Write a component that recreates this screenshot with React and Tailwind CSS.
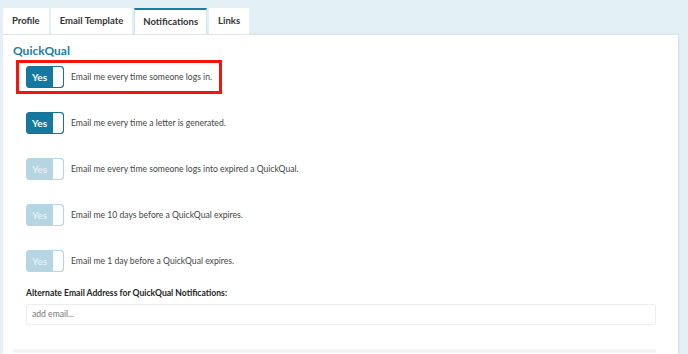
import { useState } from 'react'

const tabs = ['Profile', 'Email Template', 'Notifications', 'Links']

const options = [
  { label: 'Email me every time someone logs in.', on: true, highlight: true },
  { label: 'Email me every time a letter is generated.', on: true },
  { label: 'Email me every time someone logs into expired a QuickQual.', on: false },
  { label: 'Email me 10 days before a QuickQual expires.', on: false },
  { label: 'Email me 1 day before a QuickQual expires.', on: false },
]

const Toggle = ({ on }) => (
  <div
    className={
      on
        ? 'flex h-[22px] w-[38px] shrink-0 overflow-hidden rounded-[3px] border border-[#1c6f95] bg-[#1479a1]'
        : 'flex h-[22px] w-[38px] shrink-0 overflow-hidden rounded-[3px] border border-[#b7d6e2] bg-[#b4d5e1]'
    }
  >
    <span className={on ? 'flex flex-1 items-center pl-[5px] text-[10px] font-bold text-white' : 'flex flex-1 items-center pl-[5px] text-[10px] font-bold text-[#e4f0f5]'}>
      Yes
    </span>
    <span className="w-[10px] rounded-r-[3px] bg-white" />
  </div>
)

export default function App() {
  const [active] = useState('Notifications')

  return (
    <div className="h-[354px] w-[688px] overflow-hidden bg-[#e3f1f7] pl-[3px] pr-[10px] pt-[8px] font-['Lato','Open_Sans',sans-serif] text-[#333]">
      {/* Tabs */}
      <div className="flex gap-[2px]">
        {tabs.map(t => (
          <div
            key={t}
            className={
              t === active
                ? 'flex h-[26px] items-center border-x border-t-2 border-x-[#cfe3ea] border-t-[#1b7ea3] bg-white px-[8px] text-[9.5px] font-bold'
                : 'flex h-[26px] items-center bg-white px-[9px] text-[9.5px] font-bold'
            }
          >
            {t}
          </div>
        ))}
      </div>

      {/* Panel */}
      <div className="h-[320px] border-t border-[#e0e6e8] bg-white pl-[10px] pr-[22px] shadow-[1px_0_2px_rgba(0,0,0,0.08)]">
        <h2 className="pt-[9px] text-[12px] font-bold leading-[14px] text-[#1b7ea3]">QuickQual</h2>

        <div className="mt-[2px] flex flex-col gap-[12px]">
          {options.map((o, i) => (
            <div key={i} className="flex">
              <div
                className={
                  o.highlight
                    ? 'ml-[3px] flex items-center gap-[7px] border-[3px] border-[#f5140c] py-[3px] pl-[7px] pr-[7px]'
                    : 'ml-[3px] flex items-center gap-[7px] border-[3px] border-transparent py-[3px] pl-[7px] pr-[7px]'
                }
              >
                <Toggle on={o.on} />
                <span className="text-[8.6px] text-[#444]">{o.label}</span>
              </div>
            </div>
          ))}
        </div>

        <div className="mt-[9px] pl-[13px]">
          <label className="block text-[8.6px] font-bold leading-[12px] text-[#222]">Alternate Email Address for QuickQual Notifications:</label>
          <input
            placeholder="add email..."
            className="mt-[3px] h-[21px] w-full rounded-[2px] border border-[#eceeef] px-[5px] text-[8.6px] text-[#555] outline-none placeholder:text-[#777]"
          />
        </div>

        <div className="mt-[24px] h-[4px] bg-[#f4f5f5]" />
      </div>
    </div>
  )
}
